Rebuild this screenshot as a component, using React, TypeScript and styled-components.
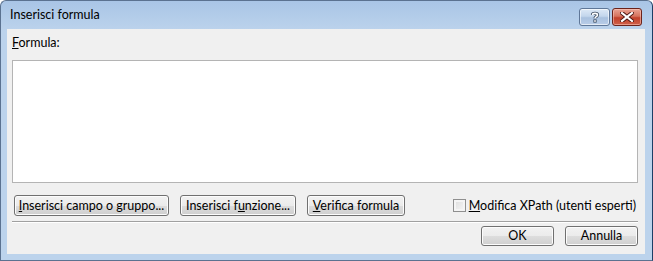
import React, { useState } from "react";
import styled, { createGlobalStyle } from "styled-components";

const GlobalStyle = createGlobalStyle`
  html, body {
    margin: 0;
    padding: 0;
    background: #ffffff;
  }
  body {
    font-family: Lato, "Noto Sans", sans-serif;
    font-size: 12px;
  }
`;

const App: React.FC = () => {
  const [xpath, setXpath] = useState(false);

  return (
    <>
      <GlobalStyle />
      <Window>
        <TitleBar>
          <Title>Inserisci formula</Title>
          <CaptionButtons>
            <HelpButton aria-label="Guida">
              <svg width="12" height="12" viewBox="0 0 12 12">
                <path
                  d="M3.5 4 C3.5 1.8 8.5 1.8 8.5 4 C8.5 5.6 6 5.6 6 7.3"
                  fill="none"
                  stroke="#3b4b60"
                  strokeWidth="3.2"
                />
                <path
                  d="M3.5 4 C3.5 1.8 8.5 1.8 8.5 4 C8.5 5.6 6 5.6 6 7.3"
                  fill="none"
                  stroke="#ffffff"
                  strokeWidth="1.6"
                />
                <rect x="4.4" y="8.4" width="3.2" height="3.2" fill="#3b4b60" />
                <rect x="5.2" y="9.2" width="1.6" height="1.6" fill="#ffffff" />
              </svg>
            </HelpButton>
            <CloseButton aria-label="Chiudi">
              <svg width="14" height="10" viewBox="0 0 14 10">
                <path
                  d="M2 1 L12 9 M12 1 L2 9"
                  stroke="#4a1410"
                  strokeWidth="4"
                  strokeLinecap="square"
                />
                <path
                  d="M2 1 L12 9 M12 1 L2 9"
                  stroke="#ffffff"
                  strokeWidth="2.2"
                  strokeLinecap="square"
                />
              </svg>
            </CloseButton>
          </CaptionButtons>
        </TitleBar>

        <Client>
          <FieldLabel htmlFor="formula">
            <u>F</u>ormula:
          </FieldLabel>
          <FormulaBox id="formula" />

          <ActionRow>
            <Button $width={155}>
              <u>I</u>nserisci campo o gruppo...
            </Button>
            <Button $width={116}>
              Inserisci f<u>u</u>nzione...
            </Button>
            <Button $width={98}>
              <u>V</u>erifica formula
            </Button>
            <CheckLabel>
              <CheckBox
                type="checkbox"
                checked={xpath}
                onChange={() => setXpath(!xpath)}
              />
              <span>
                <u>M</u>odifica XPath (utenti esperti)
              </span>
            </CheckLabel>
          </ActionRow>

          <Separator />

          <FooterRow>
            <DialogButton $width={73}>OK</DialogButton>
            <DialogButton $width={73}>Annulla</DialogButton>
          </FooterRow>
        </Client>
      </Window>
    </>
  );
};

export default App;

const Window = styled.div`
  box-sizing: border-box;
  width: 653px;
  height: 261px;
  display: flex;
  flex-direction: column;
  padding: 0 7px 6px 6px;
  border: 1px solid #5b7290;
  border-right-color: #1c3f66;
  border-radius: 6px 6px 0 0;
  background: linear-gradient(to bottom, #a9c5e6 0px, #bcd3ec 30px, #bcd3ec 100%);
`;

const TitleBar = styled.div`
  height: 28px;
  display: flex;
  align-items: flex-start;
  justify-content: space-between;
`;

const Title = styled.div`
  padding: 6px 0 0 3px;
  font-size: 12.5px;
  color: #000000;
`;

const CaptionButtons = styled.div`
  display: flex;
  gap: 2px;
  margin-top: 7px;
  margin-right: 3px;
`;

const CaptionButton = styled.div`
  box-sizing: border-box;
  height: 18px;
  display: flex;
  align-items: center;
  justify-content: center;
  border: 1px solid #5f7798;
  border-radius: 3px;
`;

const HelpButton = styled(CaptionButton)`
  width: 31px;
  background: linear-gradient(to bottom, #dde9f6 0%, #c3d6ec 45%, #a9c1df 55%, #b9cde8 100%);
  box-shadow: inset 0 0 0 1px rgba(255, 255, 255, 0.6);
`;

const CloseButton = styled(CaptionButton)`
  width: 30px;
  border-color: #6b231b;
  background: linear-gradient(to bottom, #e8a394 0%, #d6735e 45%, #c2412b 55%, #cf6049 100%);
  box-shadow: inset 0 0 0 1px rgba(255, 210, 200, 0.5);
`;

const Client = styled.div`
  flex: 1;
  display: flex;
  flex-direction: column;
  padding: 5px 7px 0 5px;
  background: #f0f0f0;
  color: #000000;
  font-size: 12.5px;
`;

const FieldLabel = styled.label`
  height: 17px;
  line-height: 17px;
  margin-bottom: 9px;
`;

const FormulaBox = styled.textarea`
  box-sizing: border-box;
  width: 100%;
  height: 123px;
  margin: 0;
  border: 1px solid #b4b4b4;
  background: #ffffff;
  resize: none;
  outline: none;
`;

const ActionRow = styled.div`
  display: flex;
  align-items: center;
  margin-top: 12px;
  padding-left: 2px;
  gap: 11px;
`;

const Button = styled.button<{ $width: number }>`
  box-sizing: border-box;
  width: ${({ $width }) => $width}px;
  height: 21px;
  padding: 0;
  border: 1px solid #707070;
  border-radius: 3px;
  background: linear-gradient(to bottom, #f2f2f2 0%, #ebebeb 50%, #dddddd 51%, #cfcfcf 100%);
  box-shadow: inset 0 0 0 1px #fcfcfc;
  font-family: Lato, "Noto Sans", sans-serif;
  font-size: 12.5px;
  color: #000000;
  line-height: 18px;
  white-space: nowrap;
`;

const CheckLabel = styled.label`
  margin-left: auto;
  margin-right: 2px;
  display: flex;
  align-items: center;
  gap: 3px;
  white-space: nowrap;
`;

const CheckBox = styled.input`
  appearance: none;
  box-sizing: border-box;
  width: 13px;
  height: 13px;
  margin: 0;
  border: 1px solid #8f8f8f;
  background: linear-gradient(135deg, #dcdcdc 0%, #f6f6f6 100%);
  box-shadow: inset 0 0 0 2px #f4f4f4;
`;

const Separator = styled.div`
  height: 1px;
  margin-top: 5px;
  background: #a0a0a0;
  border-bottom: 1px solid #ffffff;
`;

const FooterRow = styled.div`
  display: flex;
  justify-content: flex-end;
  gap: 11px;
  margin-top: 3px;
`;

const DialogButton = styled(Button)`
  height: 20px;
`;
